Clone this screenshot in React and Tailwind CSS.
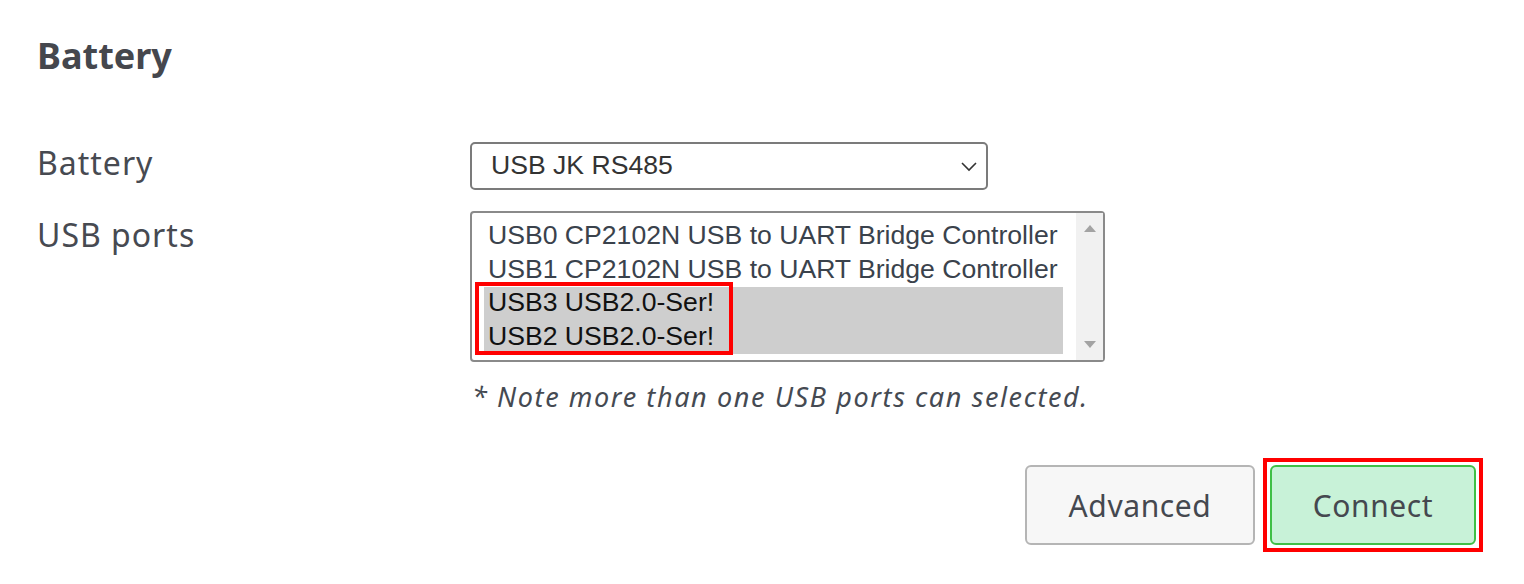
import React from "react";

const PORTS = [
  { id: "usb0", label: "USB0 CP2102N USB to UART Bridge Controller", selected: false },
  { id: "usb1", label: "USB1 CP2102N USB to UART Bridge Controller", selected: false },
  { id: "usb3", label: "USB3 USB2.0-Ser!", selected: true },
  { id: "usb2", label: "USB2 USB2.0-Ser!", selected: true },
];

const uiFont = { fontFamily: '"Noto Sans", "Open Sans", sans-serif' };
const formFont = { fontFamily: '"Liberation Sans", Arial, sans-serif' };

export default function App() {
  return (
    <div className="w-[1524px] h-[584px] bg-white text-[#474a51] pl-[37px] pt-[37px]" style={uiFont}>
      <h2 className="text-[36px] leading-[38px] font-bold text-[#45474d]">Battery</h2>

      <div className="mt-[67px] grid grid-cols-[433px_1fr] gap-y-[21px]">
        {/* Battery type */}
        <div className="text-[32px] leading-[42px] tracking-[1px]">Battery</div>
        <div
          className="w-[518px] h-[48px] border-2 border-[#7b7b7b] rounded-[5px] flex items-center justify-between pl-[19px] pr-[8px] text-[26.6px] text-[#333]"
          style={formFont}
        >
          <span>USB JK RS485</span>
          <svg width="18" height="18" viewBox="0 0 18 18" fill="none" stroke="#333" strokeWidth="1.6">
            <path d="M2 6l7 7 7-7" />
          </svg>
        </div>

        {/* USB ports */}
        <div className="text-[32px] leading-[42px] tracking-[1px] mt-[3px]">USB ports</div>
        <div>
          <div
            className="relative w-[635px] h-[151px] border-2 border-[#8a8a8a] rounded-[4px] flex text-[26.6px]"
            style={formFont}
          >
            <div className="flex-1 pl-[12px] pr-[13px] pt-[7px]">
              {PORTS.map((p) => (
                <div
                  key={p.id}
                  className={
                    "h-[33.5px] leading-[31px] pl-[4px] whitespace-nowrap " +
                    (p.selected ? "bg-[#cecece] text-[#111]" : "text-[#3a424c]")
                  }
                >
                  {p.label}
                </div>
              ))}
            </div>
            {/* scrollbar */}
            <div className="w-[27px] bg-[#f1f1f1] flex flex-col items-center justify-between py-[12px]">
              <svg width="12" height="7" viewBox="0 0 12 7">
                <path d="M6 0l6 7H0z" fill="#a3a3a3" />
              </svg>
              <svg width="12" height="7" viewBox="0 0 12 7">
                <path d="M0 0h12L6 7z" fill="#a3a3a3" />
              </svg>
            </div>
            {/* annotation box */}
            <div className="absolute left-[3px] top-[69px] w-[258px] h-[73px] border-4 border-[#ff0000] pointer-events-none" />
          </div>
          <p className="mt-[18px] ml-[2px] text-[27px] leading-[34px] italic tracking-[1.6px] text-[#454a52]">
            * Note more than one USB ports can selected.
          </p>
        </div>
      </div>

      <div className="mt-[44px] pr-[41px] flex justify-end items-center gap-[8px]">
        <button className="w-[230px] h-[80px] bg-[#f7f7f7] border-2 border-[#b5b5b5] rounded-[6px] text-[30px] tracking-[0.6px] text-[#45484f]">
          Advanced
        </button>
        <div className="border-4 border-[#ff0000] p-[3px]">
          <button className="w-[206px] h-[80px] bg-[#c8f2d8] border-2 border-[#3fbf46] rounded-[6px] text-[30px] tracking-[0.6px] text-[#45484f]">
            Connect
          </button>
        </div>
      </div>
    </div>
  );
}
